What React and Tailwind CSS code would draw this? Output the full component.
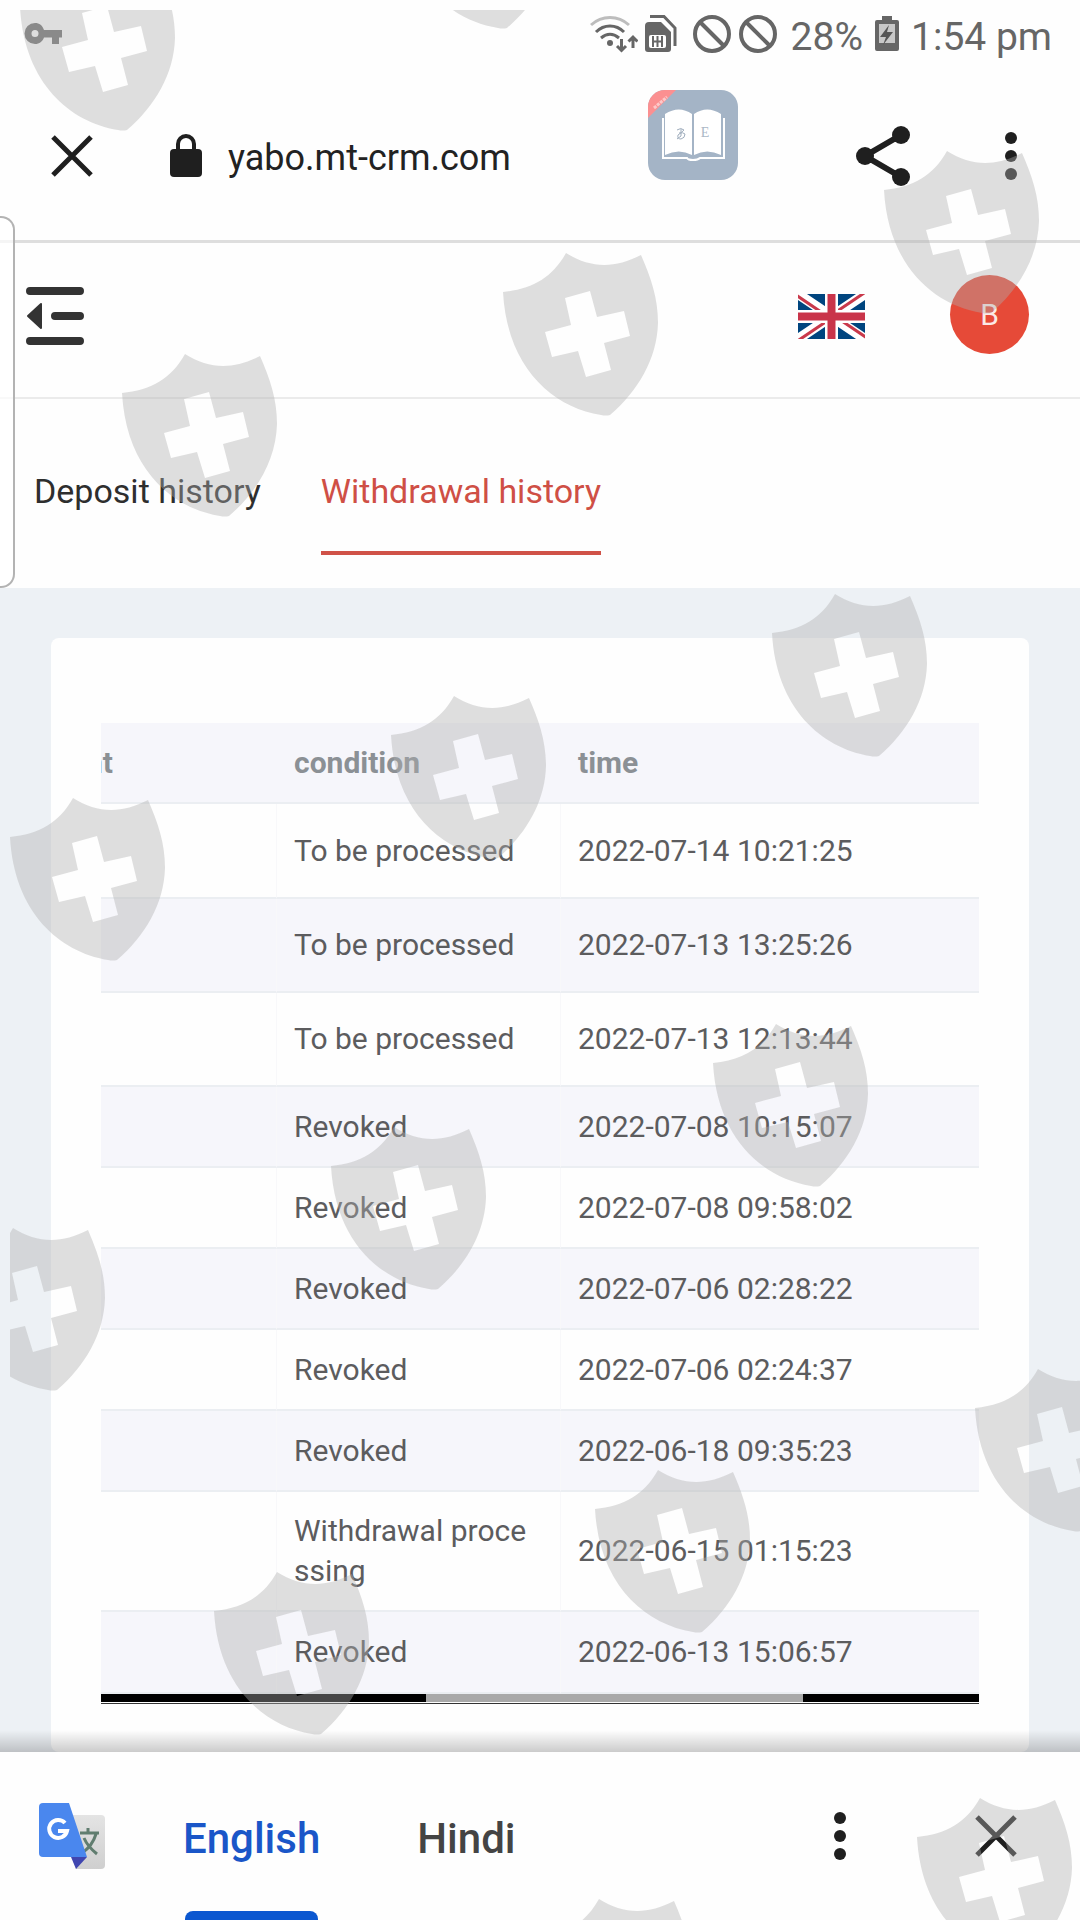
const SHIELDS = [
  [19, -33], [399, -135], [883, 150], [121, 353], [502, 252], [771, 593],
  [390, 695], [9, 797], [712, 1023], [330, 1126], [-51, 1227], [974, 1368],
  [594, 1469], [213, 1571], [916, 1797], [535, 1898],
];

const ROWS = [
  { condition: "To be processed", time: "2022-07-14 10:21:25", size: "h-[95px]" },
  { condition: "To be processed", time: "2022-07-13 13:25:26", size: "h-[94px]" },
  { condition: "To be processed", time: "2022-07-13 12:13:44", size: "h-[94px]" },
  { condition: "Revoked", time: "2022-07-08 10:15:07", size: "h-[81px]" },
  { condition: "Revoked", time: "2022-07-08 09:58:02", size: "h-[81px]" },
  { condition: "Revoked", time: "2022-07-06 02:28:22", size: "h-[81px]" },
  { condition: "Revoked", time: "2022-07-06 02:24:37", size: "h-[81px]" },
  { condition: "Revoked", time: "2022-06-18 09:35:23", size: "h-[81px]" },
  { condition: "Withdrawal processing", time: "2022-06-15 01:15:23", size: "h-[120px]" },
  { condition: "Revoked", time: "2022-06-13 15:06:57", size: "h-[82px]" },
];

function Watermark() {
  return (
    <svg
      aria-hidden="true"
      viewBox="0 0 1080 1920"
      preserveAspectRatio="xMidYMin meet"
      className="pointer-events-none absolute inset-0 z-20 h-full w-full"
    >
      <clipPath id="mark-area">
        <rect x="10" y="10" width="1070" height="1910" />
      </clipPath>
      <g clipPath="url(#mark-area)" fill="#b0b0b0" fillOpacity="0.4" fillRule="evenodd">
        {SHIELDS.map(([x, y]) => (
          <path
            key={`${x}:${y}`}
            transform={`translate(${x} ${y})`}
            d="M1 40C30 37 50 26 64 1C88 16 112 17 139 3C149 26 156 46 156 71C155 107 136 139 108 163Q104 164 99 163C50 155 5 115 1 40ZM63 46L88 39L95 65L122 59L128 84L102 91L109 118L84 125L76 99L50 105L43 80L69 73Z"
          />
        ))}
      </g>
    </svg>
  );
}

function KeyIcon() {
  return (
    <svg width="39" height="24" viewBox="0 0 39 24" fill="#727272" aria-hidden="true">
      <path
        fillRule="evenodd"
        d="M11 1A10.500 10.500 0 0 0 11 22C15.500 22 18.500 19.500 20 15.500H28V22H35V15.500H38V8H20C18.500 3.500 15.500 1 11 1ZM11 8A3.500 3.500 0 1 1 11 15A3.500 3.500 0 0 1 11 8Z"
      />
    </svg>
  );
}

function WifiIcon() {
  return (
    <svg width="48" height="38" viewBox="0 0 48 38" fill="none" stroke="#666" strokeWidth="3" aria-hidden="true">
      <path d="M1 10C12 0 28 0 39 10" stroke="#bdbdbd" />
      <path d="M6 17C14 9 26 9 34 17" />
      <path d="M11 23C17 18 23 18 29 23" />
      <circle cx="20" cy="28" r="3" fill="#666" stroke="none" />
      <path d="M31.500 24V35M27 31L31.500 35.500L36 31M43 33V22M38.500 26.500L43 22L47.500 26.500" />
    </svg>
  );
}

function SimIcon() {
  return (
    <svg width="33" height="38" viewBox="0 0 33 38" aria-hidden="true">
      <path d="M6 1.500H20L31 13V31" fill="none" stroke="#666" strokeWidth="3" />
      <path
        d="M5 7H17L27 17V34Q27 37 24 37H4Q1 37 1 34V11Q1 7 5 7Z"
        fill="#666"
      />
      <rect x="5" y="20" width="17" height="13" rx="2" fill="#fff" />
      <path d="M9 21V32M13.500 21V32M18 21V32M9 26.500H18" stroke="#666" strokeWidth="2" />
    </svg>
  );
}

function BanIcon() {
  return (
    <svg width="38" height="38" viewBox="0 0 38 38" fill="none" stroke="#666" strokeWidth="4" aria-hidden="true">
      <circle cx="19" cy="19" r="17" />
      <path d="M7 7L31 31" />
    </svg>
  );
}

function BatteryIcon() {
  return (
    <svg width="24" height="38" viewBox="0 0 24 38" aria-hidden="true">
      <path d="M7 1H17V5H22Q24 5 24 7V34Q24 36 22 36H2Q0 36 0 34V7Q0 5 2 5H7Z" fill="#666" />
      <path d="M4 9H20V28H4Z" fill="#c8c8c8" />
      <path d="M14 10L5 22H11L8 30L18 17H12Z" fill="#555" />
    </svg>
  );
}

function CloseIcon() {
  return (
    <svg width="42" height="42" viewBox="0 0 42 42" stroke="#1f1f1f" strokeWidth="5" aria-hidden="true">
      <path d="M2 2L40 40M40 2L2 40" />
    </svg>
  );
}

function LockIcon() {
  return (
    <svg width="32" height="44" viewBox="0 0 32 44" aria-hidden="true">
      <rect x="0" y="15" width="32" height="28" rx="4" fill="#1f1f1f" />
      <path d="M8 17V10A8 8 0 0 1 24 10V17" fill="none" stroke="#1f1f1f" strokeWidth="4" />
    </svg>
  );
}

function ShareIcon() {
  return (
    <svg width="54" height="60" viewBox="0 0 54 60" fill="#1f1f1f" aria-hidden="true">
      <path d="M45 9L9 30L45 51" fill="none" stroke="#1f1f1f" strokeWidth="6" />
      <circle cx="45" cy="9" r="9" />
      <circle cx="9" cy="30" r="9" />
      <circle cx="45" cy="51" r="9" />
    </svg>
  );
}

function DotsIcon() {
  return (
    <svg width="12" height="48" viewBox="0 0 12 48" fill="#1f1f1f" aria-hidden="true">
      <circle cx="6" cy="6" r="6" />
      <circle cx="6" cy="24" r="6" />
      <circle cx="6" cy="42" r="6" />
    </svg>
  );
}

function BookIcon() {
  return (
    <svg width="90" height="90" viewBox="0 0 90 90" aria-hidden="true">
      <clipPath id="book-frame">
        <rect width="90" height="90" rx="17" />
      </clipPath>
      <g clipPath="url(#book-frame)">
        <rect width="90" height="90" fill="#a4b4c6" />
        <path d="M0 0H28L0 28Z" fill="#fb9091" />
        <path d="M6 18L19 7" stroke="#fdc9c9" strokeWidth="3" strokeDasharray="3 1" />
        <path d="M15 28V68H39Q40 70 45 70Q50 70 52 68H76V28" fill="none" stroke="#fff" strokeWidth="2" />
        <path d="M17 24Q31 15 44 24V65Q31 58 17 65Z" fill="#fff" />
        <path d="M46 24Q59 15 73 24V65Q59 58 46 65Z" fill="#fff" />
        <path d="M29 40Q33 37 36 40Q33 43 30 45Q29 49 33 49Q37 48 37 44Q35 42 31 43M33 39V46L29 49" fill="none" stroke="#9fadbd" strokeWidth="1" />
        <text x="57" y="47" textAnchor="middle" fontSize="14" fill="#aab7c6" fontFamily="Liberation Serif, serif">E</text>
      </g>
    </svg>
  );
}

function MenuIcon() {
  return (
    <svg width="58" height="60" viewBox="0 0 58 60" stroke="#333" strokeWidth="8" strokeLinecap="round" aria-hidden="true">
      <path d="M4 5H54M29 30H54M4 55H54" />
      <path d="M2 30L15 18V42Z" fill="#333" strokeWidth="2" strokeLinejoin="round" />
    </svg>
  );
}

function FlagIcon() {
  return (
    <svg width="67" height="45" viewBox="0 0 67 45" aria-hidden="true">
      <clipPath id="flag-frame">
        <rect width="67" height="45" />
      </clipPath>
      <g clipPath="url(#flag-frame)">
        <rect width="67" height="45" fill="#00457f" />
        <path d="M0 0L67 45M67 0L0 45" stroke="#fff" strokeWidth="10" />
        <path d="M-2 1L32 24M69 44L35 21M69 -3L35 20M-2 48L32 25" stroke="#c9394b" strokeWidth="3" />
        <path d="M33.500 0V45M0 22.500H67" stroke="#fff" strokeWidth="13" />
        <path d="M33.500 0V45M0 22.500H67" stroke="#c9344a" strokeWidth="8" />
      </g>
    </svg>
  );
}

function TranslateIcon() {
  return (
    <svg width="66" height="66" viewBox="0 0 66 66" aria-hidden="true">
      <defs>
        <linearGradient id="paper" x1="0" y1="0" x2="0" y2="1">
          <stop offset="0" stopColor="#e4e4e4" />
          <stop offset="1" stopColor="#cfcfcf" />
        </linearGradient>
      </defs>
      <path d="M28 12H62Q66 12 66 16V62Q66 66 62 66H37Z" fill="url(#paper)" />
      <path d="M41 30H60M49 25V30M57 31C54 41 49 46 43 50M45 35C48 42 53 47 58 51" fill="none" stroke="#607d6f" strokeWidth="3" />
      <path d="M32 54H48L37 66Z" fill="#4046b0" />
      <path d="M4 0H30L48 54H4Q0 54 0 50V4Q0 0 4 0Z" fill="#4a87ee" />
      <path d="M26 20A9 9 0 1 0 28 28H19" fill="none" stroke="#fff" strokeWidth="4" />
    </svg>
  );
}

function StatusBar() {
  return (
    <div className="flex h-[68px] items-center justify-between pr-7 pl-6 text-[39px] leading-none text-[#666]">
      <KeyIcon />
      <div className="flex items-center">
        <WifiIcon />
        <span className="ml-1.5"><SimIcon /></span>
        <span className="ml-4"><BanIcon /></span>
        <span className="ml-2"><BanIcon /></span>
        <span className="ml-3.5 pt-1.5">28%</span>
        <span className="ml-3"><BatteryIcon /></span>
        <span className="ml-3 pt-1.5">1:54 pm</span>
      </div>
    </div>
  );
}

function BrowserBar() {
  return (
    <header className="relative flex h-[175px] items-center border-b-[3px] border-[#dedede] px-[51px] pt-1">
      <button type="button" aria-label="Close tab"><CloseIcon /></button>
      <span className="ml-[77px]"><LockIcon /></span>
      <span className="ml-[26px] pt-1 text-[36px] leading-10 text-[#222]">yabo.mt-crm.com</span>
      <button type="button" aria-label="Share" className="ml-auto"><ShareIcon /></button>
      <button type="button" aria-label="Browser menu" className="mr-3 ml-[95px]"><DotsIcon /></button>
      <button type="button" aria-label="Dictionary" className="absolute top-[22px] left-[60%]">
        <BookIcon />
      </button>
    </header>
  );
}

function SiteHeader() {
  return (
    <header className="flex h-[156px] items-center border-b-2 border-[#ebebeb] pr-[51px] pb-2 pl-[26px]">
      <button type="button" aria-label="Collapse menu"><MenuIcon /></button>
      <button type="button" aria-label="Language: English" className="ml-auto"><FlagIcon /></button>
      <button
        type="button"
        aria-label="Account B"
        className="mb-1 ml-[85px] size-[79px] rounded-full bg-[#e64a38] text-[30px] text-[#fbe9e7]"
      >
        B
      </button>
    </header>
  );
}

function HistoryTabs() {
  return (
    <nav className="flex h-[189px] items-start gap-[60px] pt-[59px] pl-[34px] text-[34px] leading-[66px]">
      <a href="#deposit" className="text-[#2e2e2e]">Deposit history</a>
      <a href="#withdrawal" aria-current="page" className="h-[97px] border-b-4 border-[#d05248] text-[#cf4f45]">
        Withdrawal history
      </a>
    </nav>
  );
}

function HistoryTable() {
  return (
    <table className="w-full table-fixed border-separate border-spacing-0 text-left text-[30px] leading-10 text-[#5c5c5e]">
      <colgroup>
        <col className="w-[176px]" />
        <col className="w-[284px]" />
        <col />
      </colgroup>
      <thead>
        <tr className="h-[81px] bg-[#f6f6fb] text-[#8b9095]">
          <th scope="col" className="border-b-2 border-[#ebeef2] p-0">
            <div className="flex w-3 justify-end overflow-hidden">amount</div>
          </th>
          <th scope="col" className="border-b-2 border-[#ebeef2] py-0 pl-[17px]">condition</th>
          <th scope="col" className="border-b-2 border-[#ebeef2] py-0 pl-[17px]">time</th>
        </tr>
      </thead>
      <tbody>
        {ROWS.map((row) => (
          <tr key={row.time} className={`${row.size} even:bg-[#f6f6fb]`}>
            <td className="border-r border-b-2 border-r-[#f8f8fa] border-b-[#ebeef2] p-0" />
            <td className="border-r border-b-2 border-r-[#f8f8fa] border-b-[#ebeef2] py-0 pr-7 pl-[17px] break-all">
              {row.condition}
            </td>
            <td className="border-b-2 border-[#ebeef2] py-0 pl-[17px]">{row.time}</td>
          </tr>
        ))}
      </tbody>
    </table>
  );
}

function TranslateBar() {
  return (
    <footer className="relative flex h-[168px] items-center bg-[#fefefe] pr-[63px] pl-[39px] text-[42px] font-medium">
      <div className="absolute inset-x-0 -top-[22px] h-[22px] bg-linear-to-b from-black/0 to-black/20" />
      <TranslateIcon />
      <button
        type="button"
        aria-pressed="true"
        className="relative ml-[78px] h-full pt-1 text-[#1a56c8]"
      >
        English
        <span className="absolute inset-x-0.5 bottom-0 h-[9px] rounded-t-lg bg-[#0b57d0]" />
      </button>
      <button type="button" aria-pressed="false" className="ml-[97px] h-full pt-1 text-[#444]">Hindi</button>
      <button type="button" aria-label="Translation options" className="ml-auto"><DotsIcon /></button>
      <button type="button" aria-label="Close translation" className="ml-[129px]"><CloseIcon /></button>
    </footer>
  );
}

export default function App() {
  return (
    <div className="relative flex min-h-screen flex-col overflow-hidden bg-[#fefefe] font-['Roboto',sans-serif]">
      <StatusBar />
      <BrowserBar />
      <SiteHeader />
      <HistoryTabs />
      <div className="absolute top-[216px] left-0 z-10 h-[372px] w-[15px] rounded-r-[14px] border-2 border-l-0 border-[#b3b3b3] bg-white/70" />
      <main className="flex flex-1 flex-col bg-[#edf1f5] px-[51px] pt-[50px]">
        <section className="flex-1 rounded-lg bg-[#fefefe] px-[50px] pt-[85px] pb-12">
          <HistoryTable />
          <div className="h-[10px] border-b border-[#333]">
            <div className="flex h-[8px] bg-black">
              <div className="ml-[37%] w-[43%] bg-[#a9a9a9]" />
            </div>
          </div>
        </section>
      </main>
      <TranslateBar />
      <Watermark />
    </div>
  );
}
